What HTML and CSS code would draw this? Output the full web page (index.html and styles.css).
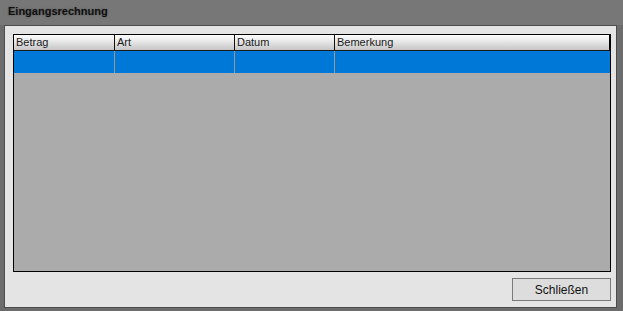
FILE: index.html
```html
<!DOCTYPE html>
<html>
<head>
<meta charset="utf-8">
<link rel="stylesheet" href="styles.css">
</head>
<body>
<div class="window">
  <div class="titlebar">Eingangsrechnung</div>
  <div class="panel">
    <div class="grid">
      <div class="row header">
        <div class="cell c1">Betrag</div>
        <div class="cell c2">Art</div>
        <div class="cell c3">Datum</div>
        <div class="cell c4">Bemerkung</div>
      </div>
      <div class="row selected">
        <div class="cell c1"></div>
        <div class="cell c2"></div>
        <div class="cell c3"></div>
        <div class="cell c4"></div>
      </div>
    </div>
    <div class="actions">
      <button class="btn">Schließen</button>
    </div>
  </div>
</div>
</body>
</html>
```
FILE: styles.css
```css
html, body {
  margin: 0;
  padding: 0;
}
body {
  width: 623px;
  height: 311px;
  overflow: hidden;
  font-family: "Liberation Sans", Arial, sans-serif;
}
.window {
  width: 623px;
  height: 311px;
  background: #6c6c6c;
  display: flex;
  flex-direction: column;
}
.titlebar {
  height: 25px;
  flex: none;
  box-sizing: border-box;
  background: #777777;
  padding: 4px 0 0 8px;
  font-size: 11px;
  font-weight: bold;
  color: #111;
  line-height: 14px;
  text-shadow: 0 0 2px rgba(0,0,0,0.35);
}
.panel {
  margin: 0 6px 3px 4px;
  height: 283px;
  box-sizing: border-box;
  border: 1px solid #4c4c4c;
  background: #e4e4e4;
  padding: 8px 5px 5px 8px;
  display: flex;
  flex-direction: column;
}
.grid {
  height: 238px;
  box-sizing: border-box;
  border: 1px solid #000;
  background: #ababab;
  flex: none;
}
.row {
  display: flex;
}
.header {
  height: 16px;
  box-sizing: border-box;
  border-bottom: 1px solid #1a1a1a;
  background: linear-gradient(#fdfdfd, #e9e9e9 40%, #c6c6c6);
  border-right: 1px solid #000;
}
.header .cell {
  border-right: 1px solid #111;
  font-size: 11px;
  line-height: 14px;
  color: #1a1a1a;
  padding-left: 2px;
}
.selected {
  height: 22px;
  background: #0078d7;
}
.selected .cell {
  border-right: 1px solid #9a9a9a;
}
.cell {
  box-sizing: border-box;
  height: 100%;
}
.c1 { width: 101px; }
.c2 { width: 120px; }
.c3 { width: 100px; }
.c4 { flex: 1; border-right: none !important; }
.actions {
  margin-top: 6px;
  display: flex;
  justify-content: flex-end;
}
.btn {
  width: 99px;
  height: 23px;
  margin: 0;
  padding: 0;
  border: 1px solid #7a7a7a;
  background: #dddddd;
  font-family: "Liberation Sans", Arial, sans-serif;
  font-size: 12px;
  color: #111;
}
```
